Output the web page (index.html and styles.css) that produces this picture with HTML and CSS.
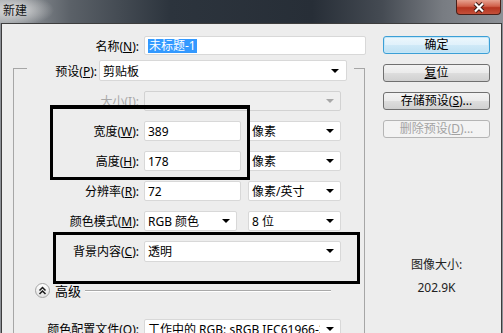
FILE: index.html
```html
<!DOCTYPE html>
<html lang="zh-CN">
<head>
  <meta charset="UTF-8">
  <title>新建</title>
  <link rel="stylesheet" href="styles.css">
</head>
<body>
  <div class="window">
    <div class="titlebar">
      <span class="title">新建</span>
      <span class="close">
        <svg width="14" height="11" viewBox="0 0 14 11">
          <path d="M3 1.5 L11 9.5 M11 1.5 L3 9.5" stroke="#3a1812" stroke-width="4.2" fill="none"/>
          <path d="M3 1.5 L11 9.5 M11 1.5 L3 9.5" stroke="#fff" stroke-width="2.2" fill="none"/>
        </svg>
      </span>
    </div>

    <div class="dialog">
      <div class="form">
        <div class="row name-row">
          <label class="lbl">名称(<u>N</u>):</label>
          <div class="field name-field"><span class="picked">未标题-1</span></div>
        </div>

        <div class="group">
          <div class="preset">
            <label class="lbl">预设(<u>P</u>):</label>
            <div class="field select preset-select"><span class="val">剪贴板</span><span class="arrow"></span></div>
          </div>

          <div class="row">
            <label class="lbl off">大小(<u>I</u>):</label>
            <div class="field select w-full is-off"><span class="val"></span><span class="arrow"></span></div>
          </div>
          <div class="row">
            <label class="lbl">宽度(<u>W</u>):</label>
            <div class="field w-num"><span class="val">389</span></div>
            <div class="field select w-unit"><span class="val">像素</span><span class="arrow"></span></div>
          </div>
          <div class="row">
            <label class="lbl">高度(<u>H</u>):</label>
            <div class="field w-num"><span class="val">178</span></div>
            <div class="field select w-unit"><span class="val">像素</span><span class="arrow"></span></div>
          </div>
          <div class="row">
            <label class="lbl">分辨率(<u>R</u>):</label>
            <div class="field w-num"><span class="val">72</span></div>
            <div class="field select w-unit"><span class="val">像素/英寸</span><span class="arrow"></span></div>
          </div>
          <div class="row">
            <label class="lbl">颜色模式(<u>M</u>):</label>
            <div class="field select w-mode"><span class="val">RGB 颜色</span><span class="arrow"></span></div>
            <div class="field select w-unit bits"><span class="val">8 位</span><span class="arrow"></span></div>
          </div>
          <div class="row">
            <label class="lbl">背景内容(<u>C</u>):</label>
            <div class="field select w-full tall"><span class="val">透明</span><span class="arrow"></span></div>
          </div>

          <div class="adv">
            <span class="toggle">
              <svg width="9" height="9" viewBox="0 0 9 9">
                <path d="M1.5 4.5 L4.5 1.5 L7.5 4.5 M1.5 8 L4.5 5 L7.5 8" stroke="#1a1a1a" stroke-width="1.5" fill="none"/>
              </svg>
            </span>
            <span class="adv-text">高级</span>
            <span class="adv-line"></span>
          </div>

          <div class="row profile">
            <label class="lbl">颜色配置文件(<u>O</u>):</label>
            <div class="field select w-full"><span class="val clip">工作中的 RGB: sRGB IEC61966-2.1</span><span class="arrow"></span></div>
          </div>
        </div>
      </div>

      <div class="side">
        <div class="btn default">确定</div>
        <div class="btn"><u>复</u>位</div>
        <div class="btn">存储预设(<u>S</u>)...</div>
        <div class="btn disabled">删除预设(<u>D</u>)...</div>
        <div class="info">
          <div>图像大小:</div>
          <div>202.9K</div>
        </div>
      </div>
    </div>

    <div class="mark mark-size"></div>
    <div class="mark mark-bg"></div>
  </div>
</body>
</html>
```

FILE: styles.css
```css
body {
  margin: 0;
  background: #8c9096;
  font-family: "Noto Sans", "Noto Sans CJK SC", sans-serif;
  font-size: 12px;
  color: #000;
  overflow: hidden;
}
.window {
  position: relative;
  width: 503px;
  height: 333px;
  overflow: hidden;
}
.titlebar {
  height: 23px;
  display: flex;
  justify-content: space-between;
  background:
    radial-gradient(ellipse 40px 16px at 14px 10px, rgba(225,225,225,0.95), rgba(225,225,225,0)),
    linear-gradient(to right, #a3a7ab 0%, #5b6168 14%, #2c343d 34%, #272e37 62%, #454b53 76%, #787c82 88%, #8d9197 100%);
}
.title {
  padding-left: 3px;
  line-height: 21px;
  color: #141414;
}
.close {
  width: 45px;
  height: 15px;
  margin-right: 2px;
  box-sizing: border-box;
  display: flex;
  align-items: center;
  justify-content: center;
  border: 1px solid #4a1f18;
  border-top: none;
  border-radius: 0 0 4px 4px;
  background: linear-gradient(#e6a290, #d0604a 45%, #b5341f 55%, #c4503a);
}
.dialog {
  display: flex;
  margin-left: 1px;
  width: 501px;
  height: 320px;
  box-sizing: border-box;
  border: 1px solid #3d3d3d;
  border-bottom: none;
  background: #ededed;
}
.form {
  width: 366px;
  flex: none;
  padding-top: 12px;
}
.row {
  display: flex;
  align-items: center;
  height: 20px;
  margin-top: 10px;
}
.lbl {
  flex: none;
  width: 125px;
  margin-right: 5px;
  text-align: right;
  white-space: nowrap;
}
.lbl.off {
  color: #a8a8a8;
}
.name-row {
  margin-top: 0;
  height: 19px;
}
.name-row .lbl {
  width: 137px;
}
.field {
  box-sizing: border-box;
  height: 100%;
  display: flex;
  align-items: center;
  padding: 0 3px;
  background: #fff;
  border: 1px solid #d8d8d8;
  border-radius: 2px;
  white-space: nowrap;
  overflow: hidden;
}
.name-field {
  width: 222px;
}
.picked {
  background: #3399ff;
  color: #fff;
  line-height: 14px;
  padding: 0 1px;
}
.arrow {
  flex: none;
  margin-left: auto;
  margin-right: 3px;
  border-top: 4px solid #000;
  border-left: 4px solid transparent;
  border-right: 4px solid transparent;
}
.clip {
  flex: none;
  overflow: hidden;
  width: 172px;
}
.is-off {
  background: #efefef;
  border-color: #d2d2d2;
}
.is-off .arrow {
  border-top-color: #a8a8a8;
}
.group {
  margin: 13px 0 0 11px;
  width: 352px;
  height: 300px;
  box-sizing: border-box;
  border: 1px solid #a6a6a6;
  border-bottom: none;
}
.preset {
  display: flex;
  align-items: center;
  width: fit-content;
  height: 21px;
  margin: -9px 0 0 13px;
  padding: 0 7px 0 22px;
  background: #ededed;
}
.preset .lbl {
  width: 48px;
  margin-right: 2px;
}
.preset-select {
  width: 248px;
}
.preset-select .arrow {
  margin-right: 4px;
}
.w-full {
  width: 197px;
}
.tall {
  height: 21px;
}
.w-num {
  width: 97px;
}
.w-unit {
  width: 93px;
  margin-left: 7px;
}
.w-mode {
  width: 93px;
}
.bits {
  margin-left: 11px;
}
.adv {
  display: flex;
  align-items: center;
  height: 15px;
  margin-top: 22px;
  padding-left: 21px;
}
.toggle {
  width: 15px;
  height: 15px;
  box-sizing: border-box;
  display: flex;
  align-items: center;
  justify-content: center;
  border: 1px solid #a4a4a4;
  border-radius: 50%;
  background: linear-gradient(#ffffff, #e2e2e2);
}
.adv-text {
  margin-left: 5px;
  font-size: 13px;
}
.adv-line {
  width: 246px;
  height: 1px;
  margin-left: 4px;
  background: #a9a9a9;
  border-bottom: 1px solid #fff;
}
.profile {
  margin-top: 21px;
}
.side {
  width: 107px;
  padding: 12px 0 0 15px;
}
.btn {
  height: 18px;
  box-sizing: border-box;
  margin-bottom: 10px;
  text-align: center;
  line-height: 16px;
  border: 1px solid #707070;
  border-radius: 3px;
  background: linear-gradient(#f3f3f3, #ebebeb 48%, #dddddd 52%, #d0d0d0);
}
.btn.default {
  border-color: #3c9fd6;
  box-shadow: inset 0 0 0 1px #c4e7f8;
  background: linear-gradient(#edf7fc, #e0f1fb 48%, #cfe9f7 52%, #bfe1f3);
}
.btn.disabled {
  color: #a3a3a3;
  border-color: #b5b5b5;
  background: #f3f3f3;
}
.info {
  margin-top: 115px;
  text-align: center;
  line-height: 23px;
  color: #222;
}
.mark {
  position: absolute;
  box-sizing: border-box;
  border: 3px solid #000;
}
.mark-size {
  left: 50px;
  top: 105px;
  width: 200px;
  height: 75px;
  border-top-width: 4px;
}
.mark-bg {
  left: 53px;
  top: 232px;
  width: 307px;
  height: 52px;
}
```
